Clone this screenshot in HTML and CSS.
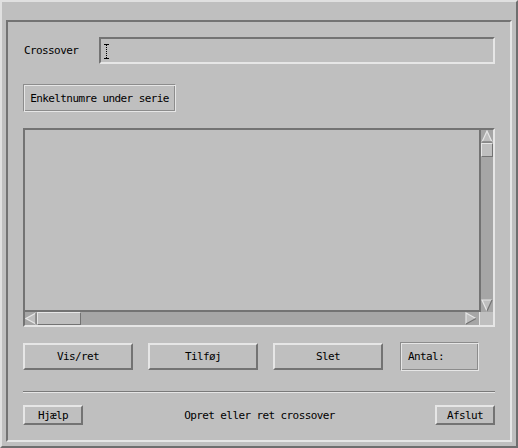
FILE: index.html
```html
<!DOCTYPE html>
<html lang="da">
<head>
    <meta charset="UTF-8">
    <title>Crossover</title>
    <link rel="stylesheet" href="styles.css">
</head>
<body>
    <div class="window">
        <div class="frame">
            <div class="entry-row">
                <span class="label">Crossover</span>
                <div class="entry">
                    <svg class="ibeam" width="5" height="15" viewBox="0 0 5 15">
                        <rect x="0" y="0" width="5" height="1" fill="#000"/>
                        <rect x="0" y="14" width="5" height="1" fill="#000"/>
                        <line x1="2.5" y1="1" x2="2.5" y2="14" stroke="#000" stroke-width="1" stroke-dasharray="1 1"/>
                    </svg>
                </div>
            </div>

            <div class="series-row">
                <button class="btn groove series">Enkeltnumre under serie</button>
            </div>

            <div class="scrolled">
                <div class="list"></div>
                <div class="vscroll">
                    <svg class="arrow" width="12" height="13" viewBox="0 0 12 13">
                        <polygon points="6,1 11,12 1,12" fill="#bfbfbf"/>
                        <polyline points="1,12 6,1 11,12" fill="none" stroke="#e6e6e6" stroke-width="1.2"/>
                        <line x1="1" y1="12" x2="11" y2="12" stroke="#737373" stroke-width="1.2"/>
                    </svg>
                    <div class="thumb v"></div>
                    <div class="trough"></div>
                    <svg class="arrow" width="12" height="13" viewBox="0 0 12 13">
                        <polygon points="1,1 11,1 6,12" fill="#bfbfbf"/>
                        <polyline points="6,12 1,1 11,1" fill="none" stroke="#e6e6e6" stroke-width="1.2"/>
                        <line x1="11" y1="1" x2="6" y2="12" stroke="#737373" stroke-width="1.2"/>
                    </svg>
                </div>
                <div class="hscroll">
                    <svg class="arrow" width="12" height="13" viewBox="0 0 12 13">
                        <polygon points="1,6.5 11,1 11,12" fill="#bfbfbf"/>
                        <polyline points="11,12 1,6.5 11,1" fill="none" stroke="#e6e6e6" stroke-width="1.2"/>
                        <line x1="11" y1="1" x2="11" y2="12" stroke="#737373" stroke-width="1.2"/>
                    </svg>
                    <div class="thumb h"></div>
                    <div class="trough"></div>
                    <svg class="arrow" width="12" height="13" viewBox="0 0 12 13">
                        <polygon points="1,1 11,6.5 1,12" fill="#bfbfbf"/>
                        <polyline points="1,12 1,1 11,6.5" fill="none" stroke="#e6e6e6" stroke-width="1.2"/>
                        <line x1="11" y1="6.5" x2="1" y2="12" stroke="#737373" stroke-width="1.2"/>
                    </svg>
                    <div class="trough-end"></div>
                </div>
                <div class="corner"></div>
            </div>

            <div class="actions">
                <button class="btn raised action">Vis/ret</button>
                <button class="btn raised action">Tilføj</button>
                <button class="btn raised action">Slet</button>
                <div class="groove count">Antal:</div>
            </div>

            <div class="separator"></div>

            <div class="footer">
                <button class="btn raised small">Hjælp</button>
                <span class="status">Opret eller ret crossover</span>
                <button class="btn raised small">Afslut</button>
            </div>
        </div>
    </div>
</body>
</html>
```

FILE: styles.css
```css
body {
    margin: 0;
    padding: 0;
    background-color: #bfbfbf;
    font-family: "DejaVu Sans Mono", "Liberation Mono", monospace;
    font-size: 11px;
    letter-spacing: -0.6px;
    color: #000;
}
.window {
    width: 518px;
    height: 448px;
    box-sizing: border-box;
    border-style: solid;
    border-width: 2px;
    border-color: #e0e0e0 #6e6e6e #6e6e6e #e0e0e0;
    padding: 18px 4px 4px 4px;
    background-color: #bfbfbf;
}
.frame {
    height: 100%;
    box-sizing: border-box;
    border-style: solid;
    border-width: 2px;
    border-color: #737373 #e6e6e6 #e6e6e6 #737373;
    padding: 15px 15px 0 15px;
    display: flex;
    flex-direction: column;
}
.entry-row {
    display: flex;
    align-items: center;
    height: 27px;
}
.label {
    width: 75px;
    padding-left: 1px;
}
.entry {
    flex: 1;
    height: 27px;
    box-sizing: border-box;
    border-style: solid;
    border-width: 2px;
    border-color: #737373 #e6e6e6 #e6e6e6 #737373;
    display: flex;
    align-items: center;
    padding-left: 3px;
}
.ibeam {
    display: block;
    margin-top: 1px;
}
.btn {
    font-family: inherit;
    font-size: inherit;
    letter-spacing: inherit;
    color: #000;
    background-color: #bfbfbf;
    padding: 0;
    margin: 0;
    box-sizing: border-box;
    cursor: pointer;
}
.groove {
    border: 1px solid;
    border-color: #8c8c8c #e6e6e6 #e6e6e6 #8c8c8c;
    box-shadow: inset 1px 1px 0 #e6e6e6, inset -1px -1px 0 #8c8c8c;
}
.raised {
    border: 2px solid;
    border-color: #e6e6e6 #737373 #737373 #e6e6e6;
}
.series-row {
    margin-top: 20px;
    display: flex;
}
.series {
    width: 153px;
    height: 28px;
}
.scrolled {
    margin-top: 16px;
    display: grid;
    grid-template-columns: 456px 16px;
    grid-template-rows: 184px 15px;
}
.list {
    border-style: solid;
    border-color: #737373;
    border-width: 2px 0 2px 2px;
}
.vscroll {
    border-style: solid;
    border-color: #737373 #e6e6e6 #737373 #737373;
    border-width: 2px 2px 0 2px;
    display: flex;
    flex-direction: column;
}
.hscroll {
    border-style: solid;
    border-color: #737373 #e6e6e6 #e6e6e6 #737373;
    border-width: 0 0 2px 2px;
    display: flex;
    align-items: stretch;
}
.arrow {
    display: block;
    flex: none;
    background-color: #a6a6a6;
}
.trough {
    flex: 1;
    background-color: #a6a6a6;
}
.trough-end {
    width: 2px;
    background-color: #a6a6a6;
}
.thumb {
    flex: none;
    box-sizing: border-box;
    background-color: #bfbfbf;
    border: 1px solid;
    border-color: #e6e6e6 #737373 #737373 #e6e6e6;
}
.thumb.v {
    height: 14px;
}
.thumb.h {
    width: 44px;
}
.corner {
    border-style: solid;
    border-color: #e6e6e6;
    border-width: 0 2px 2px 1px;
}
.actions {
    margin-top: 16px;
    display: flex;
    height: 27px;
}
.action {
    width: 110px;
    height: 27px;
    margin-right: 15px;
}
.action:nth-child(3) {
    margin-right: 17px;
}
.count {
    width: 79px;
    height: 29px;
    margin-top: -1px;
    box-sizing: border-box;
    display: flex;
    align-items: center;
    padding-left: 7px;
}
.separator {
    margin-top: 21px;
    height: 1px;
    background-color: #7a7a7a;
    border-bottom: 1px solid #e6e6e6;
}
.footer {
    margin-top: 12px;
    display: flex;
    justify-content: space-between;
    align-items: center;
    height: 20px;
}
.small {
    width: 60px;
    height: 20px;
}
.status {
    padding-left: 1px;
}
```
